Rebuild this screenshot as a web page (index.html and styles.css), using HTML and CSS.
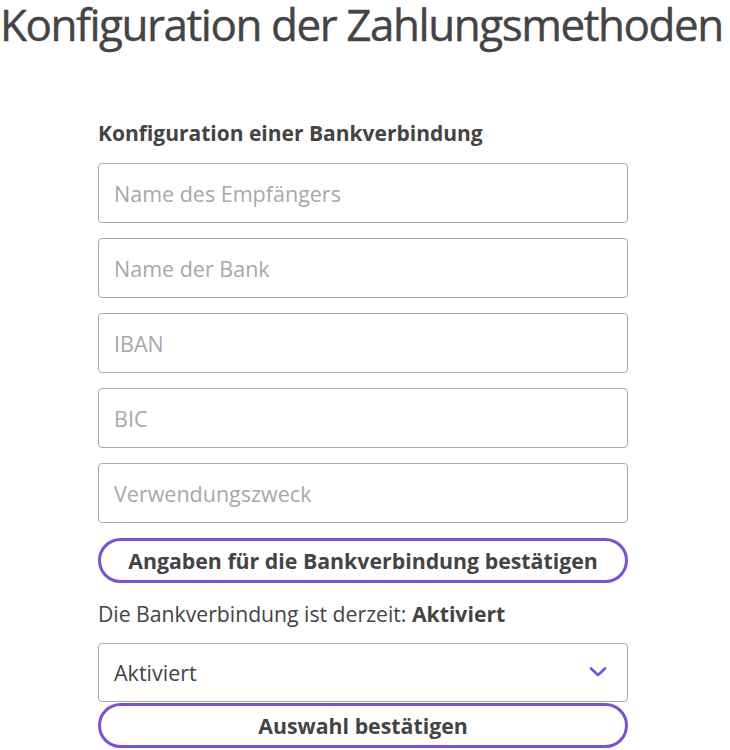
FILE: index.html
```html
<!DOCTYPE html>
<html lang="de">
<head>
<meta charset="utf-8">
<title>Konfiguration der Zahlungsmethoden</title>
<link rel="stylesheet" href="styles.css">
</head>
<body>
<h1 class="title">Konfiguration der Zahlungsmethoden</h1>
<section class="card">
  <h2 class="card-heading">Konfiguration einer Bankverbindung</h2>
  <div class="fields">
    <input class="field" type="text" placeholder="Name des Empfängers">
    <input class="field" type="text" placeholder="Name der Bank">
    <input class="field" type="text" placeholder="IBAN">
    <input class="field" type="text" placeholder="BIC">
    <input class="field" type="text" placeholder="Verwendungszweck">
  </div>
  <button class="btn btn-confirm-bank" type="button">Angaben für die Bankverbindung bestätigen</button>
  <p class="status">Die Bankverbindung ist derzeit: <strong>Aktiviert</strong></p>
  <div class="select">
    <span class="select-value">Aktiviert</span>
    <svg class="chevron" width="18" height="10" viewBox="0 0 18 10" aria-hidden="true">
      <path d="M2 1.5 L9 8 L16 1.5" fill="none" stroke="#7b4fd8" stroke-width="2.6" stroke-linecap="round" stroke-linejoin="round"/>
    </svg>
  </div>
  <button class="btn btn-confirm-select" type="button">Auswahl bestätigen</button>
</section>
</body>
</html>
```
FILE: styles.css
```css
* { box-sizing: border-box; }
html, body { margin: 0; padding: 0; background: #fff; }
body {
  font-family: "Open Sans", "Noto Sans", sans-serif;
  color: #444;
}
.title {
  margin: 0;
  font-size: 44px;
  font-weight: 400;
  line-height: 48px;
  letter-spacing: -1.45px;
  white-space: nowrap;
  color: #444;
  -webkit-text-stroke: 0.4px #444;
}
.card {
  width: 530px;
  margin: 73px 0 0 98px;
  display: flex;
  flex-direction: column;
}
.card-heading {
  margin: 0 0 18px 0;
  font-size: 21px;
  font-weight: 700;
  line-height: 24px;
  color: #444;
}
.fields {
  display: flex;
  flex-direction: column;
  gap: 15px;
}
.field {
  display: block;
  width: 100%;
  height: 60px;
  border: 1px solid #aaa;
  border-radius: 4px;
  padding: 0 15px;
  font-family: inherit;
  font-size: 21.5px;
  color: #444;
  background: #fff;
  outline: none;
}
.field::placeholder { color: #a8a8a8; opacity: 1; }
.btn {
  display: block;
  width: 100%;
  height: 45px;
  border: 3px solid #7b4fd8;
  border-radius: 23px;
  background: #fff;
  font-family: inherit;
  font-size: 21.3px;
  font-weight: 700;
  color: #444;
  padding: 0;
  cursor: pointer;
}
.btn-confirm-bank { margin-top: 15px; }
.status {
  margin: 19px 0 17px 0;
  font-size: 21.2px;
  line-height: 24px;
}
.status strong { font-weight: 700; }
.select {
  height: 59px;
  border: 1px solid #aaa;
  border-radius: 4px;
  padding: 0 20px 0 15px;
  display: flex;
  align-items: center;
  justify-content: space-between;
  font-size: 21.5px;
  color: #444;
}
.chevron { display: block; margin-top: -2px; }
.btn-confirm-select { margin-top: 1px; }
```
